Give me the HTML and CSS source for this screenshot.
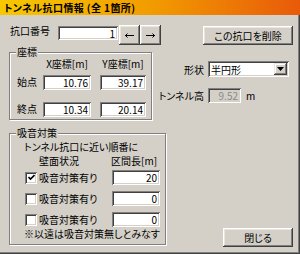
FILE: index.html
```html
<!DOCTYPE html>
<html>
<head>
    <meta charset="utf-8">
    <title>トンネル抗口情報</title>
    <link rel="stylesheet" href="styles.css">
</head>
<body>
    <div class="window">
        <div class="titlebar">トンネル抗口情報 (全 1箇所)</div>

        <div class="content">
            <!-- 抗口の選択 -->
            <div class="row-top">
                <span class="no-label">抗口番号</span>
                <input class="edit no-edit" type="text" value="1">
                <button class="btn arrow"><svg width="9" height="5" viewBox="0 0 9 5"><path d="M0 2.5H9M2.5 0.5L0.5 2.5L2.5 4.5" fill="none" stroke="#000" stroke-width="1"/></svg></button>
                <button class="btn arrow"><svg width="9" height="5" viewBox="0 0 9 5"><path d="M0 2.5H9M6.5 0.5L8.5 2.5L6.5 4.5" fill="none" stroke="#000" stroke-width="1"/></svg></button>
                <button class="btn delete">この抗口を削除</button>
            </div>

            <div class="section-a">
                <div class="group coords">
                    <span class="group-title">座標</span>
                    <div class="coord-grid">
                        <span></span>
                        <span class="head">X座標[m]</span>
                        <span class="head head-y">Y座標[m]</span>

                        <span class="row-label">始点</span>
                        <input class="edit cx" type="text" value="10.76">
                        <input class="edit cy" type="text" value="39.17">

                        <span class="row-label">終点</span>
                        <input class="edit cx" type="text" value="10.34">
                        <input class="edit cy" type="text" value="20.14">
                    </div>
                </div>

                <div class="shape-panel">
                    <div class="prop-row">
                        <span class="prop-label">形状</span>
                        <div class="combo">
                            <span class="combo-text">半円形</span>
                            <span class="combo-btn"><svg width="7" height="4" viewBox="0 0 7 4"><path d="M0 0H7L3.5 4Z" fill="#000"/></svg></span>
                        </div>
                    </div>
                    <div class="prop-row height-row">
                        <span class="prop-label">トンネル高</span>
                        <input class="edit height-edit" type="text" value="9.52" disabled>
                        <span class="unit">m</span>
                    </div>
                </div>
            </div>

            <div class="section-b">
                <div class="group sound">
                    <span class="group-title">吸音対策</span>
                    <div class="line">トンネル抗口に近い順番に</div>
                    <div class="sound-head">
                        <span>壁面状況</span>
                        <span>区間長[m]</span>
                    </div>
                    <div class="sound-row">
                        <span class="check"><svg width="7" height="7" viewBox="0 0 7 7"><path d="M0.5 3L2.5 5L6.5 1" fill="none" stroke="#000" stroke-width="1.6"/></svg></span>
                        <span class="check-label">吸音対策有り</span>
                        <input class="edit len" type="text" value="20">
                    </div>
                    <div class="sound-row">
                        <span class="check"></span>
                        <span class="check-label">吸音対策有り</span>
                        <input class="edit len" type="text" value="0">
                    </div>
                    <div class="sound-row">
                        <span class="check"></span>
                        <span class="check-label">吸音対策有り</span>
                        <input class="edit len" type="text" value="0">
                    </div>
                    <div class="note">※以遠は吸音対策無しとみなす</div>
                </div>

                <button class="btn close">閉じる</button>
            </div>
        </div>
    </div>
</body>
</html>
```

FILE: styles.css
```css
body { margin: 0; font-family: "Noto Sans CJK JP", "Liberation Sans", sans-serif; font-size: 10px; color: #000; font-feature-settings: "palt"; }
.window { width: 300px; height: 254px; box-sizing: border-box; display: flex; flex-direction: column; background: #d4d0c8; box-shadow: inset -1px -1px #404040, inset -2px -2px #808080; }
.titlebar { height: 15px; line-height: 15px; padding-left: 4px; font-weight: bold; letter-spacing: 0.4px; background: linear-gradient(to right, #f7c800, #f29c00 50%, #e85a0a); }
.content { flex: 1; display: flex; flex-direction: column; padding: 10px 7px 0 9px; }

/* 共通部品 */
.btn { display: flex; align-items: center; justify-content: center; padding: 0; border: none; background: #d4d0c8; font: inherit; font-feature-settings: "palt"; color: #000;
       box-shadow: inset -1px -1px #404040, inset 1px 1px #fff, inset -2px -2px #808080, inset 2px 2px #e8e6e2; }
.edit { box-sizing: border-box; height: 15px; margin: 0; padding: 0 3px; border: none; background: #fff; font: inherit; font-feature-settings: "palt"; color: #000; text-align: right; outline: none;
        box-shadow: inset 1px 1px #808080, inset -1px -1px #fff, inset 2px 2px #404040, inset -2px -2px #d4d0c8; }
.edit:disabled { background: #d4d0c8; color: #8a8a8a; }
.group { position: relative; box-sizing: border-box; border: 1px solid #808080; box-shadow: inset 1px 1px #fff, 1px 1px #fff; }
.group-title { position: absolute; top: -7px; left: 6px; padding: 0 1px; line-height: 12px; background: #d4d0c8; }

/* 1行目 */
.row-top { display: flex; align-items: flex-start; height: 20px; }
.no-label { width: 48px; margin-left: 1px; line-height: 12px; }
.no-edit { width: 60px; height: 14px; margin-top: 1px; }
.arrow { width: 21px; height: 20px; }
.no-edit + .arrow { margin-left: 1px; }
.delete { width: 90px; height: 19px; margin-top: 1px; margin-left: auto; }

/* 座標 */
.section-a { display: flex; }
.coords { width: 143px; margin-top: 7px; padding: 5px 0 2px 7px; }
.coord-grid { display: grid; grid-template-columns: 26px 57px 46px; grid-template-rows: 17px 27px 15px; align-items: start; }
.head { width: 48px; line-height: 12px; text-align: center; }
.head-y { width: 46px; }
.row-label { line-height: 13px; }
.cx { width: 48px; }
.cy { width: 46px; }

.shape-panel { flex: 1; padding-top: 16px; }
.prop-row { display: flex; align-items: center; }
.prop-label { width: 52px; margin-right: 4px; text-align: right; }
.combo { box-sizing: border-box; display: flex; align-items: center; width: 81px; height: 16px; padding: 2px; background: #fff;
         box-shadow: inset 1px 1px #808080, inset -1px -1px #fff, inset 2px 2px #404040, inset -2px -2px #d4d0c8; }
.combo-text { flex: 1; padding-left: 1px; }
.combo-btn { display: flex; align-items: center; justify-content: center; width: 13px; height: 12px; background: #d4d0c8;
             box-shadow: inset -1px -1px #404040, inset 1px 1px #e8e6e2, inset -2px -2px #808080, inset 2px 2px #fff; }
.height-row { margin-top: 11px; }
.height-edit { width: 33px; }
.unit { margin-left: 5px; }

/* 吸音対策 */
.section-b { flex: 1; display: flex; align-items: flex-end; }
.sound { align-self: flex-start; width: 157px; margin-top: 13px; padding: 6px 0 4px 14px; }
.line { line-height: 14px; }
.sound-head { display: grid; grid-template-columns: 72px auto; padding-left: 15px; line-height: 14px; }
.sound-row { display: grid; grid-template-columns: 15px 73px 48px; align-items: center; height: 15px; margin-top: 6px; }
.sound-head + .sound-row { margin-top: 2px; }
.check { box-sizing: border-box; display: flex; align-items: center; justify-content: center; width: 12px; height: 12px; margin-left: 1px; background: #fff;
         box-shadow: inset 1px 1px #808080, inset -1px -1px #fff, inset 2px 2px #404040, inset -2px -2px #d4d0c8; }
.check-label { line-height: 12px; }
.len { width: 48px; }
.note { margin-top: 1px; line-height: 12px; }
.close { width: 70px; height: 19px; margin-left: auto; margin-bottom: 7px; }
```
